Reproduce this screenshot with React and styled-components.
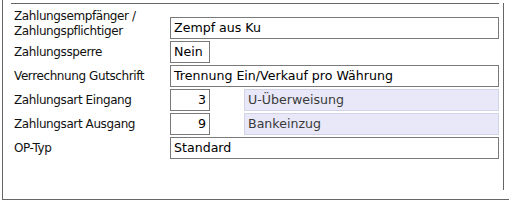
import React from 'react';
import styled, { createGlobalStyle } from 'styled-components';

const GlobalStyle = createGlobalStyle`
  body {
    margin: 0;
    background: #ffffff;
    font-family: "DejaVu Sans", Verdana, sans-serif;
    font-size: 12px;
    color: #000000;
  }
`;

const Frame = styled.div`
  margin-left: 2px;
  width: 506px;
  height: 199px;
  border-left: 1px solid #666666;
  border-bottom: 1px solid #666666;
  overflow: hidden;
`;

const Panel = styled.div`
  width: 500px;
  height: 187px;
  border-right: 1px solid #666666;
`;

const TopRule = styled.div`
  margin: 3px 0 0 8px;
  width: 488px;
  border-top: 1px solid #666666;
`;

const Form = styled.div`
  margin-top: 5px;
  padding-left: 11px;
  display: grid;
  grid-template-columns: 156px 329px;
  row-gap: 2px;
`;

const Label = styled.div`
  align-self: center;
  font-size: 12px;
  letter-spacing: -0.4px;
  line-height: 15px;
  white-space: nowrap;
  color: #111111;
`;

const Fields = styled.div`
  align-self: end;
  display: flex;
  gap: 34px;
`;

const Box = styled.div`
  box-sizing: border-box;
  height: 22px;
  width: ${p => p.$width}px;
  padding: 0 3px;
  font-size: 12.6px;
  line-height: 20px;
  white-space: nowrap;
  overflow: hidden;
  text-align: ${p => (p.$right ? 'right' : 'left')};
  border: 1px solid ${p => (p.$lookup ? '#d2d2e6' : '#7a7a7a')};
  background: ${p => (p.$lookup ? '#e8e8f8' : '#ffffff')};
  color: ${p => (p.$lookup ? '#3a3a3a' : '#000000')};
`;

const rows = [
  { label: ['Zahlungsempfänger /', 'Zahlungspflichtiger'], value: 'Zempf aus Ku', width: 329 },
  { label: ['Zahlungssperre'], value: 'Nein', width: 40 },
  { label: ['Verrechnung Gutschrift'], value: 'Trennung Ein/Verkauf pro Währung', width: 329 },
  { label: ['Zahlungsart Eingang'], value: '3', width: 40, right: true, lookup: 'U-Überweisung' },
  { label: ['Zahlungsart Ausgang'], value: '9', width: 40, right: true, lookup: 'Bankeinzug' },
  { label: ['OP-Typ'], value: 'Standard', width: 329 },
];

export default function App() {
  return (
    <>
      <GlobalStyle />
      <Frame>
        <Panel>
          <TopRule />
          <Form>
            {rows.map(row => (
              <React.Fragment key={row.label[0]}>
                <Label>
                  {row.label.map(line => (
                    <div key={line}>{line}</div>
                  ))}
                </Label>
                <Fields>
                  <Box $width={row.width} $right={row.right}>{row.value}</Box>
                  {row.lookup && (
                    <Box $width={255} $lookup>{row.lookup}</Box>
                  )}
                </Fields>
              </React.Fragment>
            ))}
          </Form>
        </Panel>
      </Frame>
    </>
  );
}
